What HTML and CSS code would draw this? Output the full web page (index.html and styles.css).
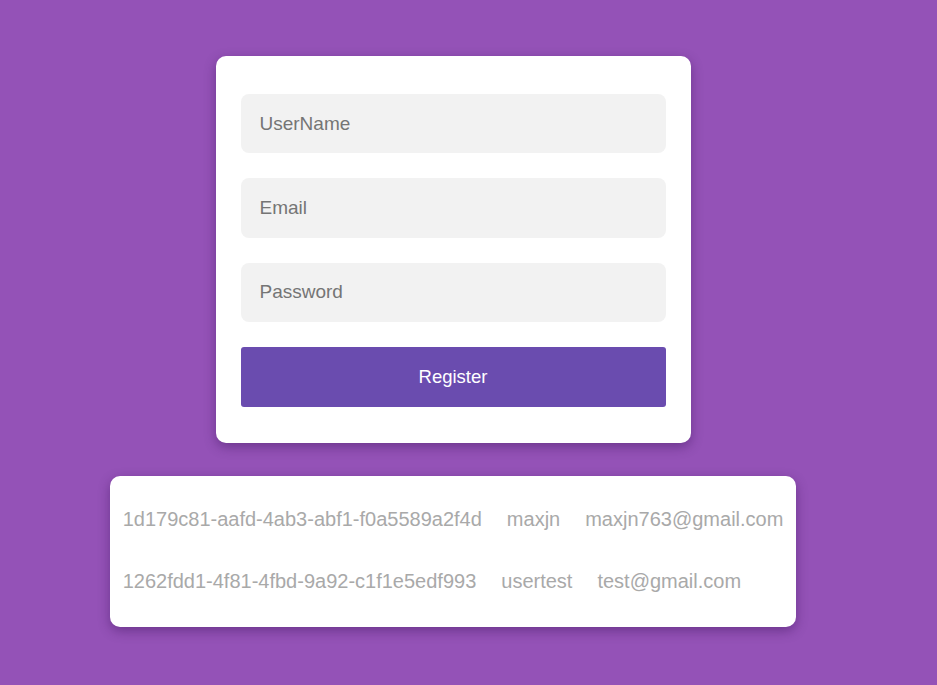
FILE: index.html
```html
<!DOCTYPE html>
<html>
<head>
<meta charset="utf-8">
<link rel="stylesheet" href="styles.css">
</head>
<body>
<main class="page">
  <form class="card">
    <input class="field" type="text" placeholder="UserName">
    <input class="field" type="email" placeholder="Email">
    <input class="field" type="password" placeholder="Password">
    <button class="btn" type="button">Register</button>
  </form>
  <section class="list">
    <div class="row"><span>1d179c81-aafd-4ab3-abf1-f0a5589a2f4d</span><span>maxjn</span><span>maxjn763@gmail.com</span></div>
    <div class="row"><span>1262fdd1-4f81-4fbd-9a92-c1f1e5edf993</span><span>usertest</span><span>test@gmail.com</span></div>
  </section>
</main>
</body>
</html>
```
FILE: styles.css
```css
html, body {
  margin: 0;
  padding: 0;
  height: 100%;
  background: #9452b7;
  font-family: "Liberation Sans", Arial, sans-serif;
}
.page {
  width: 906px;
  display: flex;
  flex-direction: column;
  align-items: center;
  padding-top: 56px;
  gap: 33px;
}
.card {
  box-sizing: border-box;
  width: 475px;
  background: #fff;
  border-radius: 10px;
  padding: 38px 25px 36px;
  display: flex;
  flex-direction: column;
  gap: 25px;
  box-shadow: 0 4px 12px rgba(60, 20, 90, 0.45);
  margin: 0;
}
.field {
  box-sizing: border-box;
  height: 59.4px;
  width: 100%;
  border: none;
  outline: none;
  background: #f2f2f2;
  border-radius: 8px;
  padding: 0 19px;
  font-family: inherit;
  font-size: 19px;
  color: #333;
}
.field::placeholder {
  color: #757575;
}
.btn {
  height: 60px;
  width: 100%;
  border: none;
  border-radius: 3px;
  background: #6a4caf;
  color: #fff;
  font-family: inherit;
  font-size: 18.5px;
}
.list {
  box-sizing: border-box;
  background: #fff;
  border-radius: 10px;
  padding: 32px 13px 34px;
  display: flex;
  flex-direction: column;
  gap: 39px;
  box-shadow: 0 4px 12px rgba(60, 20, 90, 0.45);
}
.row {
  display: flex;
  gap: 25px;
  color: #a9a9a9;
  font-size: 20px;
  line-height: 23px;
  white-space: nowrap;
}
```
